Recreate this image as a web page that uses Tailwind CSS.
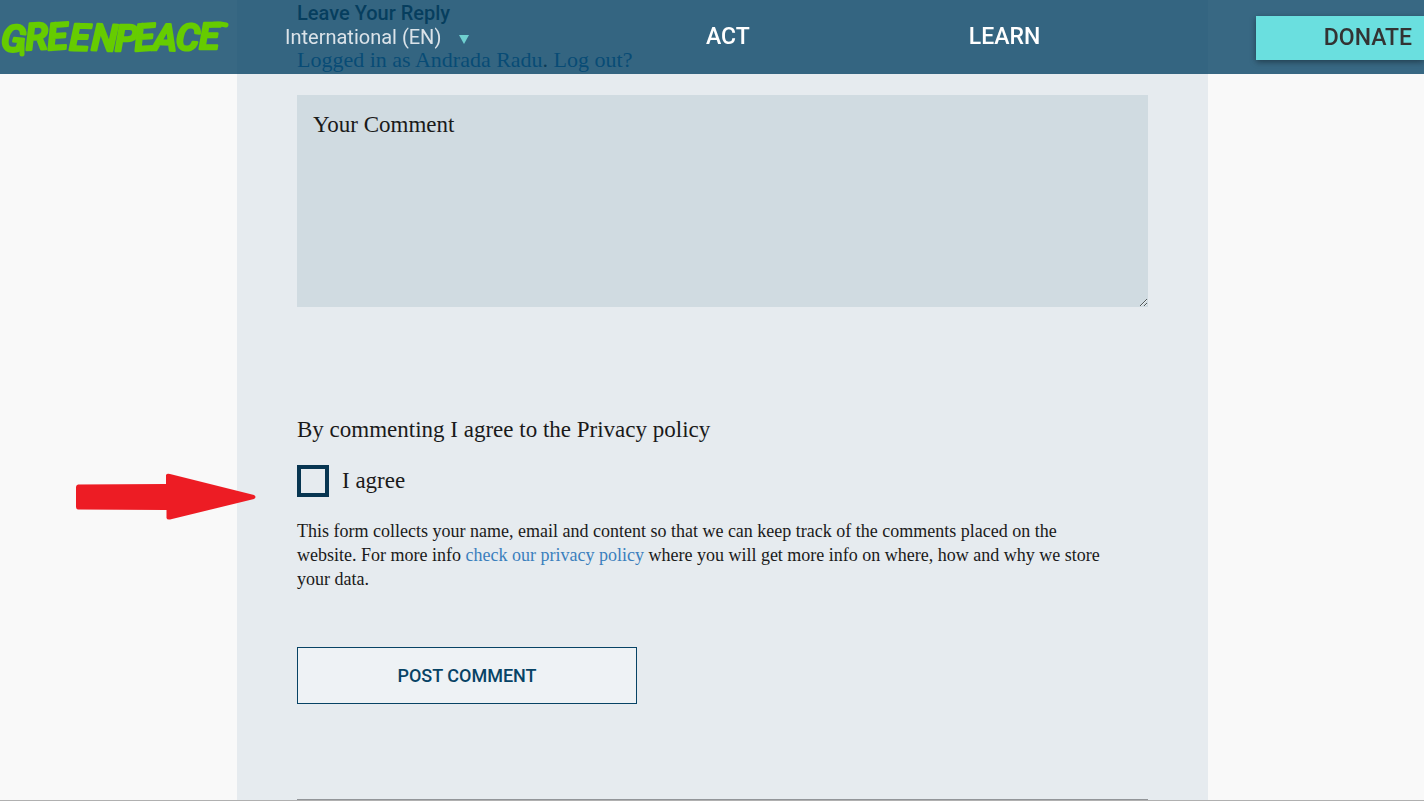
<!DOCTYPE html>
<html lang="en">
<head>
<meta charset="utf-8">
<meta name="viewport" content="width=device-width, initial-scale=1">
<title>Greenpeace International</title>
<script src="https://cdn.jsdelivr.net/npm/@tailwindcss/browser@4"></script>
</head>
<body class="bg-white font-['Liberation_Serif',serif] text-[#1a1a1a]">
<header class="fixed inset-x-0 top-0 z-10 flex h-[74px] items-center bg-[#074365]/80 font-[Roboto,sans-serif] text-white">
  <a href="#" aria-label="Greenpeace" class="shrink-0">
    <svg class="block h-[48px] w-[229px]" viewBox="0 0 229 48" fill="#66cc00" stroke="#66cc00" stroke-width="2.500" stroke-linejoin="round" stroke-linecap="round">
      <text x="0 26 48 69 91 115 135 153 175 199" y="37 37 37 37 37 38 38 37 36 36" rotate="6 -3 -4 2 3 0 -4 2 5 0" font-family="Roboto, sans-serif" font-size="37" font-weight="500" font-style="italic">GREENPEACE</text>
      <path d="M22 29L22 41M210 12Q218 10 226 12" fill="none" stroke-width="5"/>
    </svg>
  </a>
  <button type="button" class="ml-14 flex w-[184px] shrink-0 items-center justify-between text-left text-xl text-[#dbe3e9]">
    International (EN)
    <svg class="mt-1 h-[9px] w-[10px]" viewBox="0 0 10 9" fill="#6fd0d0"><path d="M0 0H10L5 9Z"/></svg>
  </button>
  <nav class="ml-[237px] flex gap-[219px] text-[23px] font-medium">
    <a href="#">ACT</a>
    <a href="#">LEARN</a>
  </nav>
  <a href="#" class="mt-0.5 ml-auto flex h-11 w-[168px] items-center justify-end bg-[#6adfdf] pr-3 text-[23px] font-medium text-[#333] shadow-[0_2px_6px_rgba(0,0,0,0.4)]">DONATE</a>
</header>

<div class="relative border-b border-[#b0b0b0] bg-[#f9f9f9]">
  <main class="mr-[216px] ml-[237px] bg-[#e6ebef] px-[60px] pt-px">
    <h2 class="font-[Roboto,sans-serif] text-xl leading-6 font-medium text-[#042a44]">Leave Your Reply</h2>
    <p class="mt-[23px] text-[22px] leading-6"><a href="#" class="text-[#0a6cb4]">Logged in as Andrada Radu</a>. <a href="#" class="text-[#0a6cb4]">Log out?</a></p>
    <form class="flex flex-col items-start">
      <textarea aria-label="Your Comment" placeholder="Your Comment" class="mt-[23px] block h-[212px] w-full resize bg-[#d0dbe1] p-4 text-[23px] leading-7 outline-none placeholder:text-[#1a1a1a]"></textarea>
      <p class="mt-[111px] text-[23px] leading-6">By commenting I agree to the Privacy policy</p>
      <label class="mt-[23px] flex items-center gap-[13px] text-[23px] leading-8">
        <input type="checkbox" class="size-8 appearance-none border-4 border-[#073551] checked:bg-[#073551]">
        I agree
      </label>
      <p class="mt-[22px] pr-12 text-lg leading-6">This form collects your name, email and content so that we can keep track of the comments placed on the website. For more info <a href="#" class="text-[#3b7fbd]">check our privacy policy</a> where you will get more info on where, how and why we store your data.</p>
      <button type="submit" class="mt-14 h-[57px] w-[340px] border border-[#074365] bg-[#eef2f5] font-[Roboto,sans-serif] text-lg font-medium text-[#074365]">POST COMMENT</button>
    </form>
    <hr class="mt-[95px] border-[#929599]">
  </main>
  <!-- Arrow pointing at the consent box -->
  <svg class="absolute top-[473px] left-[76px] h-[48px] w-[181px]" viewBox="0 0 181 48" fill="#ed1c24" aria-hidden="true"><path d="M2 11.500L90 11V2Q91 0 94 1L178 22Q181 24 178 26L94 46.500Q91 47 90.500 45V37L2 36.500Q0 36 0 34V14Q0 12 2 11.500Z"/></svg>
</div>
</body>
</html>
